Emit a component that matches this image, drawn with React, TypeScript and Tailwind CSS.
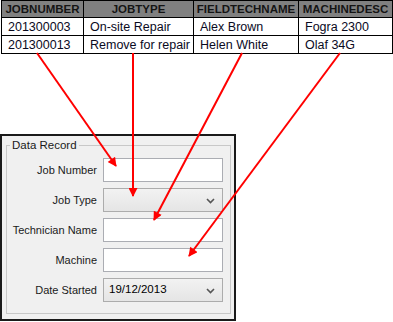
import React from "react";

const rows = [
  ["201300003", "On-site Repair", "Alex Brown", "Fogra 2300"],
  ["201300013", "Remove for repair", "Helen White", "Olaf 34G"],
];

const cols = ["JOBNUMBER", "JOBTYPE", "FIELDTECHNAME", "MACHINEDESC"];
const widths = ["w-[82px]", "w-[110px]", "w-[105px]", "w-[94px]"];

function Chevron() {
  return (
    <svg width="9" height="6" viewBox="0 0 9 6" className="absolute right-[7px] top-[9px]">
      <polyline points="1,1 4.5,4.5 8,1" fill="none" stroke="#555" strokeWidth="1.6" />
    </svg>
  );
}

function TextBox() {
  return <div className="h-[24px] w-[120px] border border-[#abadb3] bg-white" />;
}

function Combo({ value }: { value?: string }) {
  return (
    <div className="relative flex h-[24px] w-[120px] items-center border border-[#acacac] bg-gradient-to-b from-[#f2f2f2] to-[#e5e5e5] pl-[5px] text-[11.5px] text-black">
      {value}
      <Chevron />
    </div>
  );
}

function Field({ label, children }: { label: string; children: React.ReactNode }) {
  return (
    <div className="flex items-center gap-[6px]">
      <div className="w-[90px] text-right text-[11px] text-[#1a1a1a]">{label}</div>
      {children}
    </div>
  );
}

export default function App() {
  return (
    <div className="relative h-[322px] w-[393px] bg-white" style={{ fontFamily: '"Liberation Sans", Arial, sans-serif' }}>
      <table className="ml-[1px] border-collapse">
        <thead>
          <tr className="h-[17px] bg-[#808080]">
            {cols.map((c, i) => (
              <th key={c} className={`${widths[i]} border border-black p-0 text-center text-[11.5px] font-bold leading-[15px] text-[#141414]`}>
                {c}
              </th>
            ))}
          </tr>
        </thead>
        <tbody>
          {rows.map((r) => (
            <tr key={r[0]} className="h-[18px]">
              {r.map((v, i) => (
                <td key={i} className="border border-black py-0 pl-[6px] text-[12.5px] leading-[16px] text-[#0a0a1e]">
                  {v}
                </td>
              ))}
            </tr>
          ))}
        </tbody>
      </table>

      <div className="absolute left-0 top-[134px] h-[187px] w-[236px] border-2 border-[#1a1a1a] bg-[#f0f0f0]">
        <fieldset className="ml-[4px] mr-[3px] mt-[3px] border border-[#c8c8c8] pb-[11px] pt-[6px]">
          <legend className="ml-[3px] px-[2px] text-[11.5px] leading-[13px] text-[#1a1a1a]">Data Record</legend>
          <div className="flex flex-col gap-[6px]">
            <Field label="Job Number">
              <TextBox />
            </Field>
            <Field label="Job Type">
              <Combo />
            </Field>
            <Field label="Technician Name">
              <TextBox />
            </Field>
            <Field label="Machine">
              <TextBox />
            </Field>
            <Field label="Date Started">
              <Combo value="19/12/2013" />
            </Field>
          </div>
        </fieldset>
      </div>

      <svg className="pointer-events-none absolute left-0 top-0" width="393" height="322">
        <defs>
          <marker id="ah" viewBox="0 0 10 10" refX="9" refY="5" markerWidth="5" markerHeight="4.5" orient="auto">
            <path d="M0,0 L10,5 L0,10 z" fill="#ff0000" />
          </marker>
        </defs>
        <g stroke="#ff0000" strokeWidth="2" markerEnd="url(#ah)">
          <line x1="37" y1="53" x2="116" y2="166" />
          <line x1="133" y1="53" x2="133" y2="196" />
          <line x1="242" y1="53" x2="154" y2="220" />
          <line x1="340" y1="53" x2="189" y2="256" />
        </g>
      </svg>
    </div>
  );
}
